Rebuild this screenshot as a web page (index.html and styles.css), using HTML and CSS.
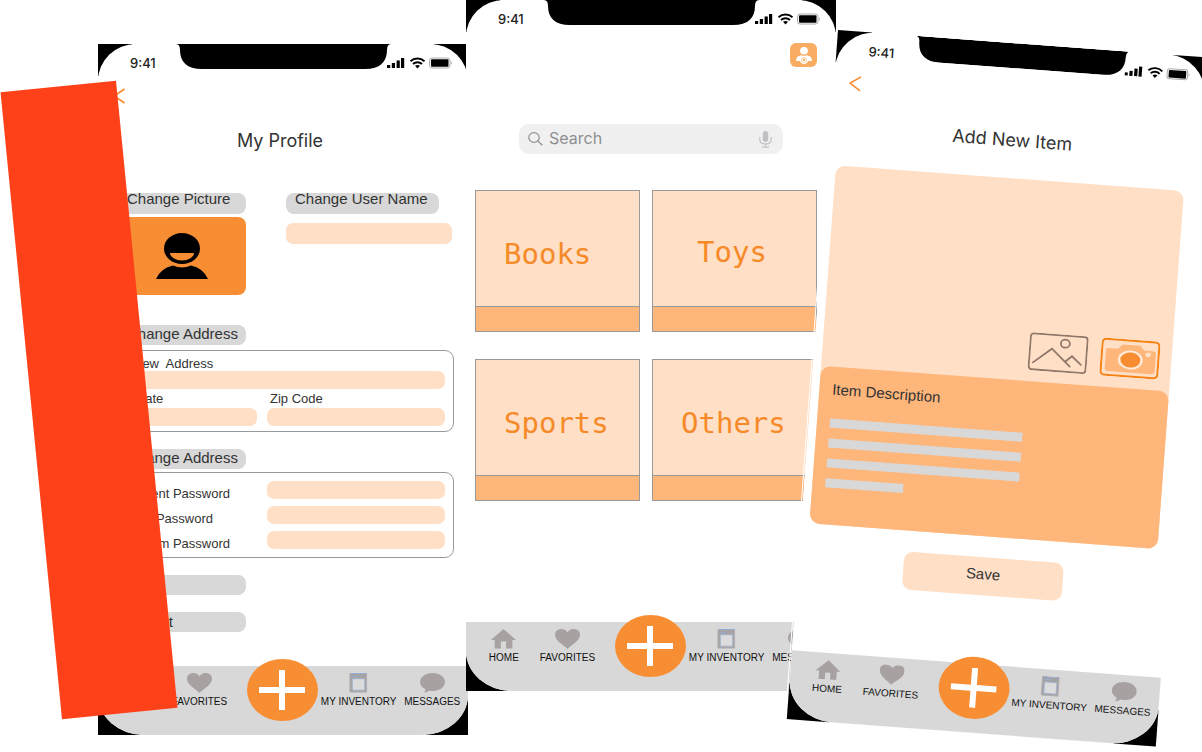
FILE: index.html
```html
<!DOCTYPE html>
<html lang="en">
<head>
<meta charset="utf-8">
<title>App screens</title>
<link rel="stylesheet" href="styles.css">
</head>
<body>
<svg class="defs" aria-hidden="true">
  <symbol id="status" viewBox="0 0 66 12">
    <path d="M0 8h3.200v3H0zM4.800 6h3.200v5H4.800zM9.600 3.500h3.200v7.500H9.600zM14 1h3.200v10h-3.200z"/>
    <path d="M23.500 4.200a10.500 10.500 0 0 1 14 0M26 7a6.500 6.500 0 0 1 9 0" fill="none" stroke="#000" stroke-width="1.900"/>
    <path d="M28 8.800q2.500-1.800 5 0L30.500 11.500z"/>
    <rect x="42.500" y="1" width="20.500" height="10" rx="2.500" fill="#fff" stroke="#aaa"/>
    <rect x="44" y="2.200" width="17.500" height="7.600" rx="1"/>
    <path d="M64 4.500q2 1.500 0 3z" fill="#aaa"/>
  </symbol>
  <symbol id="notch" viewBox="0 0 215 25"><path d="M0 0H215Q211 0 211 6C211 18 204 25 189 25H26C11 25 4 18 4 6Q4 0 0 0z"/></symbol>
  <symbol id="chevron" viewBox="0 0 12 16"><path d="M11.500 1L1 8l10.500 7" fill="none" stroke="#f98b2d" stroke-width="1.600"/></symbol>
  <symbol id="home" viewBox="0 0 24 19"><path d="M12 0L24 10.500H20.500V18.500H14.500V12H9.500V18.500H3.500V10.500H0z"/></symbol>
  <symbol id="heart" viewBox="0 0 24 19"><path d="M12 19C7 14.500 0 11 0 5.500 0-.5 8.500-2 12 3 15.500-2 24-.5 24 5.500 24 11 17 14.500 12 19z"/></symbol>
  <symbol id="box" viewBox="0 0 19 21"><path d="M.5.500h17.500v19.500H.5z" stroke="#b3aeb2" /><path d="M3 6h13v12H3z" fill="#dcdcdc" stroke="#9fb4d0"/><path d="M3 3.500h6.500M1 .5h17" stroke="#8fb0da" stroke-width="1"/></symbol>
  <symbol id="bubble" viewBox="0 0 25 20"><path d="M12.500 0C19.500 0 25 4 25 9s-5.500 9-12.500 9q-2 0-3.500-.3-2 2-5 1.800 1.500-1.500 1.300-3.200Q0 13.500 0 9c0-5 5.500-9 12.500-9z"/></symbol>
  <symbol id="plus" viewBox="0 0 46 40"><path d="M20 0h6v17h20v6H26v17h-6V23H0v-6h20z"/></symbol>
</svg>

<main class="stage">

<section class="phone phone-profile">
  <div class="screen">
    <header class="status"><span class="time">9:41</span><svg class="notch"><use href="#notch"/></svg><svg class="signals"><use href="#status"/></svg></header>
    <div class="toolbar"><button class="back" aria-label="Back"><svg><use href="#chevron"/></svg></button></div>
    <h1 class="title">My Profile</h1>
    <form class="profile">
      <div class="intro">
        <div class="stack">
          <span class="pill tight">Change Picture</span>
          <button type="button" class="picture" aria-label="Picture">
            <svg viewBox="0 0 52 46"><ellipse cx="26" cy="15.500" rx="18" ry="15.500"/><path d="M14 20h24A12 7.600 0 0 1 14 20z" fill="#f78e33"/><path d="M0 46Q5 35 17 32.500Q26 36.500 35 32.500Q47 35 52 46z"/></svg>
          </button>
        </div>
        <div class="stack wide">
          <label class="pill tight name" for="user">Change User Name</label>
          <input class="field tall" id="user">
        </div>
      </div>
      <span class="pill heading">Change Address</span>
      <fieldset class="address">
        <div class="cell full"><label for="addr">New&nbsp; Address</label><input class="field" id="addr"></div>
        <div class="cell state"><label for="state">State</label><input class="field" id="state"></div>
        <div class="cell"><label for="zip">Zip Code</label><input class="field" id="zip"></div>
      </fieldset>
      <span class="pill heading second">Change Address</span>
      <fieldset class="passwords">
        <div class="row"><label for="p1">Current Password</label><input class="field" id="p1" type="password"></div>
        <div class="row"><label for="p2">New Password</label><input class="field" id="p2" type="password"></div>
        <div class="row"><label for="p3">Confirm Password</label><input class="field" id="p3" type="password"></div>
      </fieldset>
      <button type="button" class="pill action" aria-label="Help"></button>
      <button type="button" class="pill action">Logout</button>
    </form>
    <nav class="tabs">
      <a href="#"><svg class="i-home"><use href="#home"/></svg>HOME</a>
      <a href="#"><svg class="i-heart"><use href="#heart"/></svg>FAVORITES</a>
      <button class="add" aria-label="Add"><svg><use href="#plus"/></svg></button>
      <a href="#"><svg class="i-box"><use href="#box"/></svg>MY INVENTORY</a>
      <a href="#"><svg class="i-bubble"><use href="#bubble"/></svg>MESSAGES</a>
    </nav>
  </div>
</section>

<section class="phone phone-browse">
  <div class="screen">
    <header class="status"><span class="time">9:41</span><svg class="notch"><use href="#notch"/></svg><svg class="signals"><use href="#status"/></svg></header>
    <div class="toolbar end">
      <button class="user" aria-label="Profile"><svg viewBox="0 0 16 17"><ellipse cx="8" cy="3.800" rx="3.900" ry="3.800"/><path d="M0 14Q0 9 5 8.200q3 1.200 6 0Q16 9 16 14h-4q-1 3-4 3t-4-3z"/><circle cx="8" cy="12.800" r="2.600" fill="none" stroke="#fbc794" stroke-width=".7"/><circle cx="8" cy="12.800" r="1.300" fill="#f9ad63"/></svg></button>
    </div>
    <div class="search">
      <svg class="lens" viewBox="0 0 15 14"><ellipse cx="6" cy="5.500" rx="5.200" ry="4.800"/><path d="M9.800 9l4.500 4.200"/></svg>
      <input type="search" placeholder="Search" aria-label="Search">
      <svg class="mic" viewBox="0 0 13 17"><rect x="3.800" y="0" width="5.400" height="11" rx="2.700" fill="#bfbfc4"/><path d="M.8 6v2.500q0 4.500 5.700 4.500t5.700-4.500V6M6.500 13v3M3 16.200h7" fill="none" stroke="#c4c4c8" stroke-width="1.300"/></svg>
    </div>
    <div class="tiles">
      <a class="tile" href="#"><span>Books</span></a>
      <a class="tile toys" href="#"><span>Toys</span></a>
      <a class="tile" href="#"><span>Sports</span></a>
      <a class="tile" href="#"><span>Others</span></a>
    </div>
    <nav class="tabs">
      <a href="#"><svg class="i-home"><use href="#home"/></svg>HOME</a>
      <a href="#"><svg class="i-heart"><use href="#heart"/></svg>FAVORITES</a>
      <button class="add" aria-label="Add"><svg><use href="#plus"/></svg></button>
      <a href="#"><svg class="i-box"><use href="#box"/></svg>MY INVENTORY</a>
      <a href="#"><svg class="i-bubble"><use href="#bubble"/></svg>MESSAGES</a>
    </nav>
  </div>
</section>

<section class="phone phone-item">
  <div class="screen">
    <header class="status"><span class="time">9:41</span><svg class="notch"><use href="#notch"/></svg><svg class="signals"><use href="#status"/></svg></header>
    <div class="toolbar"><button class="back" aria-label="Back"><svg><use href="#chevron"/></svg></button></div>
    <h1 class="title">Add New Item</h1>
    <div class="card">
      <div class="media">
        <button aria-label="Choose image"><svg viewBox="0 0 59 38" fill="none" stroke="#8f7869" stroke-width="1.800"><rect x="1" y="1" width="57" height="36" rx="3"/><ellipse cx="36" cy="9" rx="4.500" ry="4"/><path d="M5 30L23 15 42 31.500M37 27l6.500-6L53 29" stroke-linecap="round"/></svg></button>
        <button aria-label="Take photo"><svg viewBox="0 0 59 38"><rect x="1" y="1" width="57" height="36" rx="4" fill="#ffdfc6" stroke="#f58213" stroke-width="2"/><path d="M7 10h10l4-4.500h18l4 4.500h9q3 0 3 2.500V30q0 3-3 3H8q-3 0-3-3V12q0-2 2-2z" fill="#feb67b"/><ellipse cx="30" cy="20.500" rx="12.500" ry="9.500" fill="#ffe9d8"/><ellipse cx="30" cy="20.500" rx="10" ry="7.500" fill="#f78c30"/><ellipse cx="47.500" cy="14" rx="2.800" ry="2.300" fill="#ffdfc6"/></svg></button>
      </div>
      <div class="description">
        <h2>Item Description</h2>
        <div class="line"></div><div class="line"></div><div class="line"></div><div class="line short"></div>
      </div>
    </div>
    <button class="save">Save</button>
    <nav class="tabs">
      <a href="#"><svg class="i-home"><use href="#home"/></svg>HOME</a>
      <a href="#"><svg class="i-heart"><use href="#heart"/></svg>FAVORITES</a>
      <button class="add" aria-label="Add"><svg><use href="#plus"/></svg></button>
      <a href="#"><svg class="i-box"><use href="#box"/></svg>MY INVENTORY</a>
      <a href="#"><svg class="i-bubble"><use href="#bubble"/></svg>MESSAGES</a>
    </nav>
  </div>
</section>

<div class="banner"></div>
</main>
</body>
</html>
```

FILE: styles.css
```css
* { box-sizing: border-box; }
body { margin: 0; background: #fff; font-family: "Liberation Sans", Arial, sans-serif; color: #333; }
button, input { font: inherit; color: inherit; border: 0; padding: 0; margin: 0; background: none; }
svg { display: block; }
.defs { position: absolute; width: 0; height: 0; }

/* Free canvas holding the overlapping screens */
.stage { position: relative; min-height: 100vh; overflow: hidden; }
/* Black shows only behind the rounded corners of the screen */
.phone {
  position: absolute; width: 370px;
  background:
    linear-gradient(#000, #000) left top / 34px 32px no-repeat,
    linear-gradient(#000, #000) right top / 34px 32px no-repeat,
    linear-gradient(#000, #000) left bottom / 42px 36px no-repeat,
    linear-gradient(#000, #000) right bottom / 42px 36px no-repeat,
    linear-gradient(#fff 620px, #d8d8d8 625px);
}
.phone-profile { left: 98px; top: 44px; }
.phone-browse { left: 466px; top: 0; }
.phone-item { left: 838px; top: 30px; transform: rotate(4.25deg); transform-origin: 0 0; outline: 1px solid #fff; outline-offset: 1px; }
.banner { position: absolute; left: 31px; top: 85px; width: 116px; height: 630px; background: #ff4119; transform: rotate(-5.6deg); }
.screen { display: flex; flex-direction: column; min-height: 691px; overflow: hidden; background: #fff; border-radius: 38px 38px 46px 46px / 37px 37px 40px 40px; }

.status { display: grid; grid-template-columns: 78px 215px 1fr; height: 40px; }
.time { padding: 10px 0 0 32px; font: 500 13px/18px Inter, sans-serif; color: #222; }
.notch { width: 215px; height: 25px; }
.signals { width: 66px; height: 12px; margin: 13px 0 0 -4px; }
.toolbar { display: flex; height: 30px; padding: 4px 15px; }
.toolbar.end { justify-content: flex-end; padding: 3px 19px; }
.back { align-self: flex-start; }
.back svg { width: 12px; height: 16px; }
.user { display: flex; align-items: center; justify-content: center; width: 27px; height: 24px; background: #f9ad63; border-radius: 6px; }
.user svg { width: 16px; height: 17px; fill: #fff; }
.title { margin: 15px 6px 0 0; font: 400 18px/24px Inter, sans-serif; text-align: center; }

.profile { padding: 40px 14px 0 20px; }
.intro { display: grid; grid-template-columns: 128px 1fr; gap: 40px; padding-right: 2px; margin-bottom: 30px; }
.stack { display: flex; flex-direction: column; gap: 3px; }
.stack.wide { gap: 9px; }
.pill { display: block; width: 128px; height: 20px; padding: 0 9px; border-radius: 8px; background: #d8d8d8; font-size: 15px; line-height: 18px; text-align: right; white-space: nowrap; }
.pill.tight { height: 21px; line-height: 12px; text-align: left; }
.pill.name { width: 153px; }
.pill.heading { margin-bottom: 5px; }
.pill.second { margin: 17px 0 3px; }
.pill.action { margin-top: 17px; text-align: left; }
.picture { display: flex; align-items: center; justify-content: center; height: 78px; border-radius: 8px; background: #f78e33; }
.picture svg { width: 52px; height: 46px; }
.field { display: block; width: 100%; height: 18px; border-radius: 7px; background: #ffdfc6; }
.field.tall { height: 21px; }
fieldset { margin: 0 0 0 -4px; min-width: 0; border: 1px solid #999; border-radius: 9px; font-size: 13px; }
.address { display: grid; grid-template-columns: 1fr 178px; column-gap: 10px; row-gap: 4px; height: 82px; padding: 5px 8px 6px 8px; }
.cell label { display: block; height: 15px; padding-left: 3px; line-height: 11px; }
.cell.full { grid-column: 1 / -1; }
.cell.full label { padding-left: 10px; line-height: 15px; }
.cell.state label { padding-left: 10px; }
.passwords { display: flex; flex-direction: column; gap: 7px; height: 86px; padding: 8px; }
.row { display: grid; grid-template-columns: 1fr 178px; }
.row label { padding: 7px 37px 0 0; line-height: 11px; text-align: right; white-space: nowrap; }
.row:nth-child(2) label { padding-right: 54px; }

.search { display: flex; align-items: center; height: 30px; margin: 54px 53px 0; padding: 0 11px 0 9px; border-radius: 10px; background: #f0f0f1; }
.search input { flex: 1; min-width: 0; padding: 0 0 2px 6px; outline: 0; font: 16px/22px Inter, sans-serif; }
.search input::placeholder { color: #8e8e90; }
.lens { width: 15px; height: 14px; fill: none; stroke: #919193; stroke-width: 1.2; }
.mic { width: 13px; height: 17px; }
.tiles { display: grid; grid-template-columns: 1fr 1fr; gap: 27px 12px; padding: 36px 19px 0 9px; }
.tile { display: block; height: 142px; padding: 46px 0 0 28px; border: 1px solid #999; background: linear-gradient(to bottom, #ffdfc6 115px, #999 115px, #999 116px, #feb67b 116px); color: #f78a28; font: 29px/34px "DejaVu Sans Mono", monospace; text-decoration: none; }
.tile.toys { padding: 44px 0 0 44px; }

.card { margin: 26px 13px 0 8px; border-radius: 10px; background: #ffdfc6; }
.media { display: flex; justify-content: flex-end; align-items: flex-end; gap: 13px; height: 201px; padding: 0 12px 11px; }
.media svg { width: 59px; height: 38px; }
.description { height: 158px; padding: 14px 13px; border-radius: 10px; background: #feb67b; }
.description h2 { margin: 0 0 20px; font-size: 15px; font-weight: 400; line-height: 18px; }
.line { width: 193px; height: 9px; margin-bottom: 11px; background: #d8d8d8; }
.line.short { width: 78px; }
.save { width: 160px; height: 38px; margin: 21px 0 0 105px; padding-bottom: 5px; border-radius: 9px; background: #ffdfc6; font-size: 15px; }

.tabs { display: grid; grid-template-columns: 64fr 64fr 90fr 74fr 72fr; height: 69px; margin-top: auto; padding-left: 6px; background: #d8d8d8; }
.tabs a { display: flex; flex-direction: column; align-items: center; gap: 3px; padding-top: 7px; font-size: 10px; line-height: 12px; color: #111; text-decoration: none; white-space: nowrap; }
.tabs a svg { height: 20px; fill: #a7a1a2; }
.i-home, .i-heart, .i-bubble { width: 25px; }
.i-box { width: 19px; }
.add { display: flex; align-items: center; justify-content: center; justify-self: end; width: 71px; height: 62px; margin: -7px 3px 0 0; border-radius: 50%; background: #f78e33; }
.add svg { width: 46px; height: 40px; fill: #fff; }
```
